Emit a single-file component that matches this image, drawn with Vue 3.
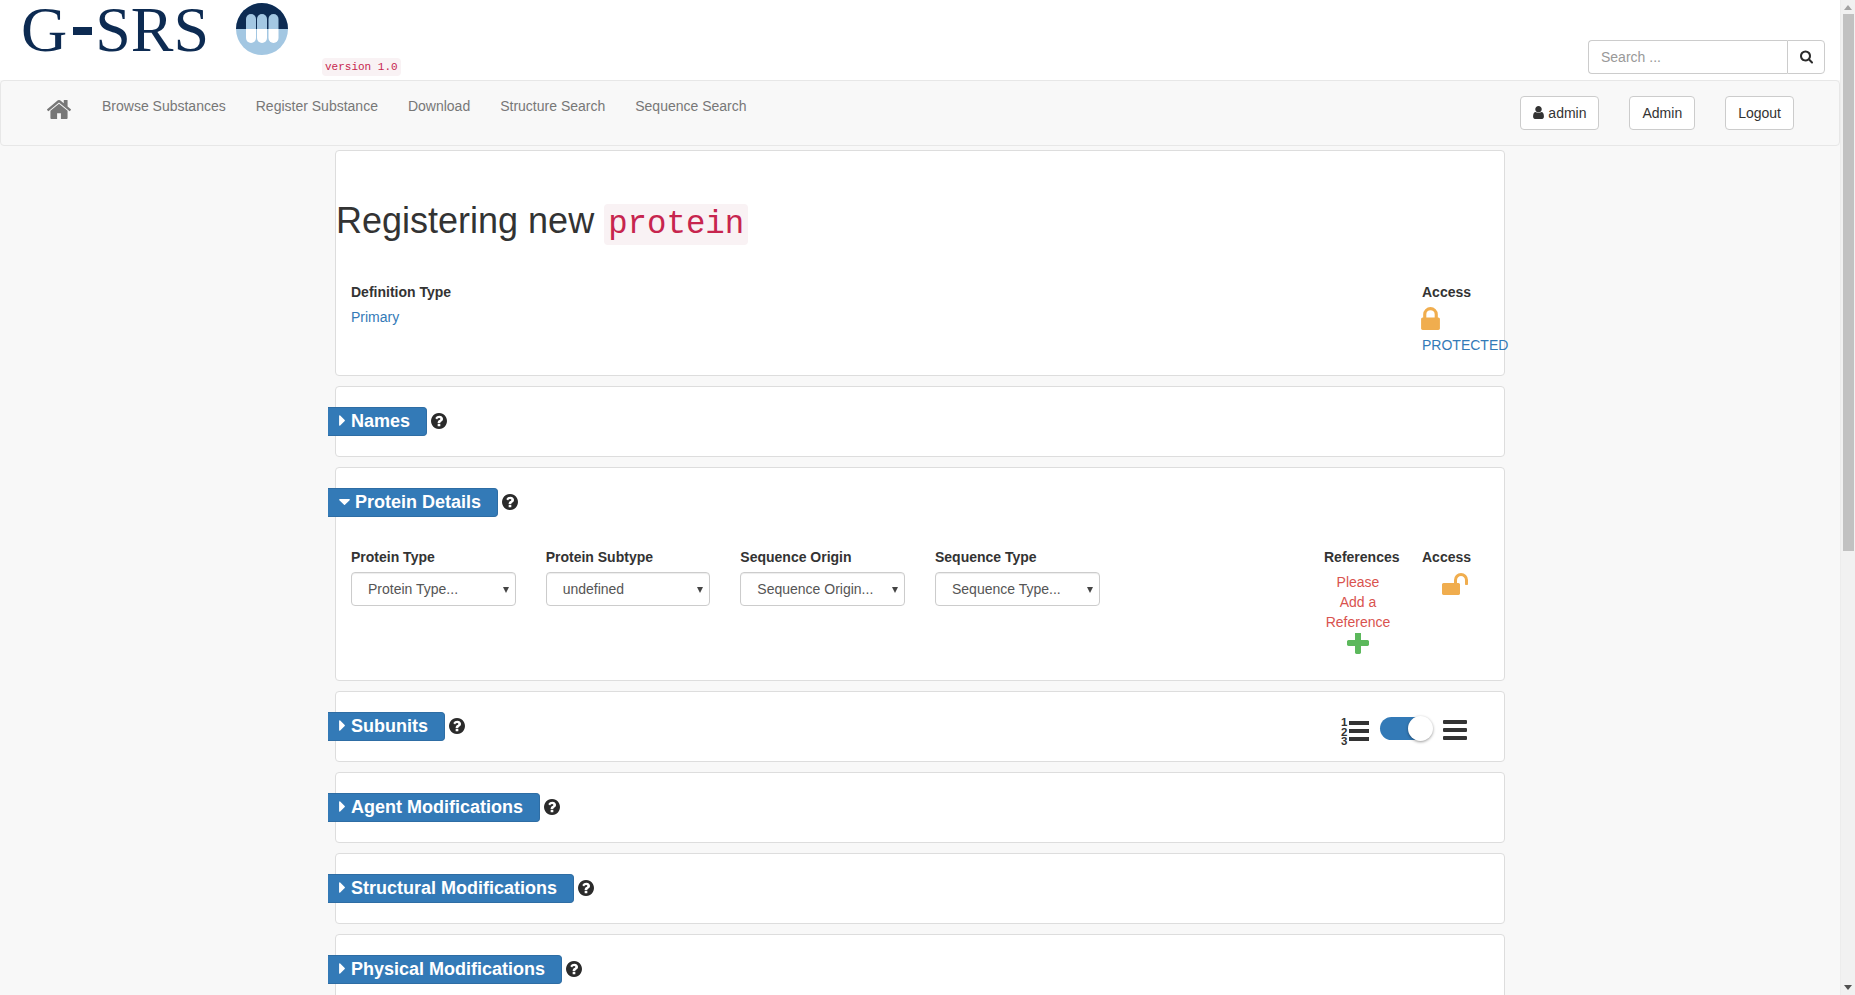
<template>
  <div class="screen">
    <div class="page">
      <header class="brand-bar">
        <div class="brand-text">G<span class="brand-dash">-</span>SRS</div>
        <svg class="brand-mark" width="52" height="52" viewBox="0 0 52 52">
          <defs>
            <clipPath id="upper"><rect x="0" y="0" width="52" height="26" /></clipPath>
            <clipPath id="lower"><rect x="0" y="26" width="52" height="26" /></clipPath>
          </defs>
          <circle cx="26" cy="26" r="26" fill="#a3c7e2" />
          <g clip-path="url(#upper)">
            <circle cx="26" cy="26" r="26" fill="#0d2b52" />
            <rect v-for="x in pillX" :key="x" :x="x" y="11" width="10" height="29" rx="5" fill="#a3c7e2" />
          </g>
          <g clip-path="url(#lower)">
            <rect v-for="x in pillX" :key="x" :x="x" y="11" width="10" height="29" rx="5" fill="#fff" />
          </g>
        </svg>
        <code class="version">version 1.0</code>
        <div class="search">
          <input class="search-input" type="text" placeholder="Search ..." />
          <button class="search-btn" type="button">
            <svg width="13" height="13.5" viewBox="64 64 1664 1728"><path :d="icons.search" fill="#2b2b2b" /></svg>
          </button>
        </div>
      </header>

      <nav class="navbar">
        <svg class="home" width="24" height="20" viewBox="90 192 1612 1344"><path :d="icons.home" fill="#777" /></svg>
        <a v-for="link in navLinks" :key="link" class="nav-link">{{ link }}</a>
        <div class="nav-actions">
          <button class="btn" type="button">
            <svg width="11" height="13" viewBox="256 128 1280 1536"><path :d="icons.user" fill="#333" /></svg>
            admin
          </button>
          <button class="btn" type="button">Admin</button>
          <button class="btn" type="button">Logout</button>
        </div>
      </nav>

      <main class="container">
        <section class="panel title-panel">
          <h1 class="title">Registering new <code class="title-code">protein</code></h1>
          <div class="def-row">
            <div class="def-type">
              <div class="label">Definition Type</div>
              <a class="link">Primary</a>
            </div>
            <div class="access">
              <div class="label">Access</div>
              <svg class="lock" width="19" height="23" viewBox="320 128 1152 1408"><path :d="icons.lock" fill="#f0ad4e" /></svg>
              <a class="link protected">PROTECTED</a>
            </div>
          </div>
        </section>

        <section v-for="section in sections" :key="section.title" class="panel section-panel">
          <div class="section-head">
            <div class="tab">
              <svg v-if="section.open" class="caret-down" width="11" height="6" viewBox="384 640 1024 576"><path :d="icons.caretDown" fill="#fff" /></svg>
              <svg v-else class="caret-right" width="6" height="11" viewBox="576 352 576 1088"><path :d="icons.caretRight" fill="#fff" /></svg>
              <span>{{ section.title }}</span>
            </div>
            <svg class="help" width="16" height="16" viewBox="128 128 1536 1536"><path :d="icons.question" fill="#2b2b2b" /></svg>

            <div v-if="section.toggle" class="view-toggle">
              <svg class="list-icon" width="29" height="30" viewBox="0 0 29 30">
                <text x="1" y="10" class="num">1</text>
                <text x="1" y="19.5" class="num">2</text>
                <text x="1" y="29" class="num">3</text>
                <rect x="9" y="5" width="20" height="4" fill="#333" />
                <rect x="9" y="13" width="20" height="4" fill="#333" />
                <rect x="9" y="21" width="20" height="4" fill="#333" />
              </svg>
              <div class="switch"><div class="knob"></div></div>
              <div class="bars"><i></i><i></i><i></i></div>
            </div>
          </div>

          <div v-if="section.open" class="fields">
            <div v-for="field in fields" :key="field.label" class="field">
              <label class="label">{{ field.label }}</label>
              <div class="select-wrap">
                <select class="form-control">
                  <option>{{ field.value }}</option>
                </select>
              </div>
            </div>
            <div class="refs">
              <div class="label">References</div>
              <div class="refs-body">
                <span class="refs-text">Please Add a Reference</span>
                <svg class="plus" width="22" height="22" viewBox="192 192 1408 1408"><path :d="icons.plus" fill="#5cb85c" /></svg>
              </div>
            </div>
            <div class="access">
              <div class="label">Access</div>
              <svg class="unlock" width="26" height="22" viewBox="64 128 1664 1408"><path :d="icons.unlock" fill="#f0ad4e" /></svg>
            </div>
          </div>
        </section>
      </main>
    </div>

    <div class="scrollbar">
      <span class="arrow up"></span>
      <div class="thumb"></div>
      <span class="arrow down"></span>
    </div>
  </div>
</template>

<script setup>
const pillX = [10, 21, 32.5]

const navLinks = ['Browse Substances', 'Register Substance', 'Download', 'Structure Search', 'Sequence Search']

const fields = [
  { label: 'Protein Type', value: 'Protein Type...' },
  { label: 'Protein Subtype', value: 'undefined' },
  { label: 'Sequence Origin', value: 'Sequence Origin...' },
  { label: 'Sequence Type', value: 'Sequence Type...' }
]

const sections = [
  { title: 'Names' },
  { title: 'Protein Details', open: true },
  { title: 'Subunits', toggle: true },
  { title: 'Agent Modifications' },
  { title: 'Structural Modifications' },
  { title: 'Physical Modifications' }
]

const icons = {
  home: 'M1472 992v480q0 26-19 45t-45 19h-384v-384h-256v384h-384q-26 0-45-19t-19-45v-480q0-1 .5-3t.5-3l575-474 575 474q1 2 1 6zm223-69l-62 74q-8 9-21 11h-3q-13 0-21-7l-692-577-692 577q-12 8-24 7-13-2-21-11l-62-74q-8-10-7-23.5t11-21.5l719-599q32-26 76-26t76 26l244 204v-195q0-14 9-23t23-9h192q14 0 23 9t9 23v408l219 182q10 8 11 21.5t-7 23.5z',
  user: 'M1536 1399q0 109-62.5 187t-150.5 78h-854q-88 0-150.5-78t-62.5-187q0-85 8.5-160.5t31.5-152 58.5-131 94-89 134.5-34.5q131 128 313 128t313-128q76 0 134.5 34.5t94 89 58.5 131 31.5 152 8.5 160.5zm-256-887q0 159-112.5 271.5t-271.5 112.5-271.5-112.5-112.5-271.5 112.5-271.5 271.5-112.5 271.5 112.5 112.5 271.5z',
  search: 'M1216 832q0-185-131.5-316.5t-316.5-131.5-316.5 131.5-131.5 316.5 131.5 316.5 316.5 131.5 316.5-131.5 131.5-316.5zm512 832q0 52-38 90t-90 38q-54 0-90-38l-343-342q-179 124-399 124-143 0-273.5-55.5t-225-150-150-225-55.5-273.5 55.5-273.5 150-225 225-150 273.5-55.5 273.5 55.5 225 150 150 225 55.5 273.5q0 220-124 399l343 343q37 37 37 90z',
  lock: 'M640 768h512v-192q0-106-75-181t-181-75-181 75-75 181v192zm832 96v576q0 40-28 68t-68 28h-960q-40 0-68-28t-28-68v-576q0-40 28-68t68-28h32v-192q0-184 132-316t316-132 316 132 132 316v192h32q40 0 68 28t28 68z',
  unlock: 'M1728 576v256q0 26-19 45t-45 19h-64q-26 0-45-19t-19-45v-256q0-106-75-181t-181-75-181 75-75 181v192h96q40 0 68 28t28 68v576q0 40-28 68t-68 28h-960q-40 0-68-28t-28-68v-576q0-40 28-68t68-28h672v-192q0-185 131.5-316.5t316.5-131.5 316.5 131.5 131.5 316.5z',
  plus: 'M1600 736v192q0 40-28 68t-68 28h-416v416q0 40-28 68t-68 28h-192q-40 0-68-28t-28-68v-416h-416q-40 0-68-28t-28-68v-192q0-40 28-68t68-28h416v-416q0-40 28-68t68-28h192q40 0 68 28t28 68v416h416q40 0 68 28t28 68z',
  question: 'M1024 1376v-192q0-14-9-23t-23-9h-192q-14 0-23 9t-9 23v192q0 14 9 23t23 9h192q14 0 23-9t9-23zm256-672q0-88-55.5-163t-138.5-116-170-41q-243 0-371 213-15 24 8 42l132 100q7 6 19 6 16 0 25-12 53-68 86-92 34-24 86-24 48 0 85.5 26t37.5 59q0 38-20 61t-68 45q-63 28-115.5 86.5t-52.5 125.5v36q0 14 9 23t23 9h192q14 0 23-9t9-23q0-19 21.5-49.5t54.5-49.5q32-18 49-28.5t46-35 44.5-48 28-60.5 12.5-81zm384 192q0 209-103 385.5t-279.5 279.5-385.5 103-385.5-103-279.5-279.5-103-385.5 103-385.5 279.5-279.5 385.5-103 385.5 103 279.5 279.5 103 385.5z',
  caretRight: 'M1152 896q0 26-19 45l-448 448q-19 19-45 19t-45-19-19-45v-896q0-26 19-45t45-19 45 19l448 448q19 19 19 45z',
  caretDown: 'M1408 704q0 26-19 45l-448 448q-19 19-45 19t-45-19l-448-448q-19-19-19-45t19-45 45-19h896q26 0 45 19t19 45z'
}
</script>

<style>
html,
body {
  margin: 0;
  overflow: hidden;
}
</style>

<style scoped>
* {
  box-sizing: border-box;
}

.screen {
  display: flex;
  width: 1855px;
  height: 995px;
  overflow: hidden;
  font-family: "Liberation Sans", Arial, sans-serif;
  font-size: 14px;
  line-height: 20px;
  color: #333;
}

.page {
  width: 1840px;
  height: 995px;
  overflow: hidden;
  background: #f8f8f8;
}

.brand-bar {
  display: flex;
  height: 80px;
  padding-left: 21px;
  background: #fff;
}

.brand-text {
  width: 215px;
  height: 76px;
  font-family: "Liberation Serif", "Times New Roman", serif;
  font-size: 64px;
  line-height: 60px;
  white-space: nowrap;
  color: #0d2b52;
}

.brand-dash {
  position: relative;
  display: inline-block;
  width: 28px;
  height: 60px;
  color: transparent;
  vertical-align: top;
}

.brand-dash::after {
  content: "";
  position: absolute;
  top: 27px;
  left: 6px;
  width: 19px;
  height: 8px;
  background: #0d2b52;
}

.brand-mark {
  flex-shrink: 0;
  margin-top: 3px;
}

.version {
  align-self: flex-start;
  margin: 58px 0 0 34px;
  padding: 2px 3px;
  font-family: "Liberation Mono", monospace;
  font-size: 11px;
  line-height: 14px;
  color: #c7254e;
  background: #f9f2f4;
  border-radius: 4px;
}

.search {
  display: flex;
  height: 34px;
  margin: 40px 15px 0 auto;
}

.search-input {
  width: 199px;
  height: 34px;
  padding: 6px 12px;
  font: inherit;
  color: #555;
  background: #fff;
  border: 1px solid #ccc;
  border-right: 0;
  border-radius: 4px 0 0 4px;
  outline: none;
}

.search-input::placeholder {
  color: #999;
}

.search-btn {
  display: flex;
  align-items: center;
  justify-content: center;
  width: 38px;
  height: 34px;
  padding: 0;
  background: #fff;
  border: 1px solid #ccc;
  border-radius: 0 4px 4px 0;
}

.navbar {
  display: flex;
  align-items: flex-start;
  height: 66px;
  padding: 15px 45px 0 46px;
  background: #f8f8f8;
  border: 1px solid #e7e7e7;
  border-radius: 4px;
}

.home {
  flex-shrink: 0;
  margin: 3px 31px 0 0;
}

.nav-link {
  margin-right: 30px;
  color: #777;
}

.nav-actions {
  display: flex;
  gap: 30px;
  margin-left: auto;
}

.btn {
  display: block;
  height: 34px;
  padding: 6px 12px;
  font: inherit;
  color: #333;
  background: #fff;
  border: 1px solid #ccc;
  border-radius: 4px;
}

.btn svg {
  vertical-align: -1px;
}

.container {
  width: 1170px;
  margin: 4px auto 0;
}

.panel {
  margin-bottom: 10px;
  background: #fff;
  border: 1px solid #ddd;
  border-radius: 4px;
}

.title-panel {
  height: 226px;
}

.title {
  margin: 0;
  padding-top: 50px;
  font-size: 36px;
  font-weight: 500;
  line-height: 40px;
}

.title-code {
  padding: 2px 4px;
  font-family: "Liberation Mono", monospace;
  font-size: 32.4px;
  color: #c7254e;
  background: #f9f2f4;
  border-radius: 4px;
}

.def-row {
  display: flex;
  justify-content: space-between;
  margin-top: 37px;
  padding: 0 14px 0 15px;
}

.label {
  display: block;
  font-weight: 700;
  white-space: nowrap;
}

.def-type .link {
  display: block;
  margin-top: 5px;
}

.link {
  color: #337ab7;
}

.access {
  flex-shrink: 0;
  width: 68px;
}

.lock {
  display: block;
  margin: 5px 0 0 -1px;
}

.protected {
  display: block;
  margin-top: 5px;
  white-space: nowrap;
}

.unlock {
  display: block;
  margin: 6px 0 0 20px;
}

.section-panel {
  min-height: 71px;
  padding-top: 20px;
}

.section-head {
  display: flex;
  align-items: center;
  height: 29px;
}

.tab {
  display: flex;
  align-items: center;
  height: 29px;
  margin-left: -8px;
  padding: 0 16px 2px 11px;
  font-size: 18px;
  font-weight: 700;
  color: #fff;
  white-space: nowrap;
  background: #337ab7;
  border: 1px solid #2e6da4;
  border-left: 0;
  border-radius: 0 4px 4px 0;
}

.caret-right {
  margin-right: 6px;
}

.caret-down {
  margin-right: 5px;
}

.help {
  margin: -2px 0 0 4px;
}

.view-toggle {
  display: flex;
  align-items: flex-start;
  align-self: flex-start;
  margin: 0 37px 0 auto;
}

.list-icon {
  margin-top: 4px;
}

.num {
  font-family: "Liberation Sans", Arial, sans-serif;
  font-size: 11.5px;
  font-weight: 700;
  fill: #333;
}

.switch {
  position: relative;
  width: 52px;
  height: 23px;
  margin: 5px 0 0 11px;
  background: #337ab7;
  border-radius: 12px;
}

.knob {
  position: absolute;
  top: -1px;
  right: -1px;
  width: 25px;
  height: 25px;
  background: #fff;
  border-radius: 50%;
  box-shadow: 0 1px 3px rgba(0, 0, 0, 0.4);
}

.bars {
  display: flex;
  flex-direction: column;
  gap: 4px;
  width: 24px;
  margin: 8px 0 0 11px;
}

.bars i {
  display: block;
  height: 4px;
  background: #333;
  border-radius: 1px;
}

.fields {
  display: flex;
  align-items: flex-start;
  gap: 30px;
  margin-top: 30px;
  padding: 0 14px 25px 15px;
}

.field {
  width: 164.67px;
  flex-shrink: 0;
}

.field .label {
  margin-bottom: 5px;
}

.select-wrap {
  position: relative;
}

.select-wrap::after {
  content: "";
  position: absolute;
  top: 15px;
  right: 7px;
  border-top: 6px solid #444;
  border-left: 3px solid transparent;
  border-right: 3px solid transparent;
  pointer-events: none;
}

.form-control {
  display: block;
  width: 100%;
  height: 34px;
  padding: 6px 16px;
  font: inherit;
  color: #555;
  background: #fff;
  border: 1px solid #ccc;
  border-radius: 4px;
  box-shadow: inset 0 1px 1px rgba(0, 0, 0, 0.075);
  appearance: none;
}

.refs {
  flex-shrink: 0;
  width: 68px;
  margin-left: auto;
}

.refs-body {
  display: flex;
  flex-direction: column;
  align-items: center;
  margin-top: 5px;
  text-align: center;
  color: #d9534f;
}

.refs-text {
  display: block;
  width: 68px;
}

.plus {
  margin-top: 1px;
}

.scrollbar {
  display: flex;
  flex-direction: column;
  align-items: center;
  width: 15px;
  height: 995px;
  background: #f1f1f1;
  border-left: 1px solid #ececec;
}

.thumb {
  width: 11px;
  height: 537px;
  margin-top: 4px;
  background: #c1c1c1;
}

.arrow {
  display: block;
  width: 0;
  height: 0;
  border-left: 4px solid transparent;
  border-right: 4px solid transparent;
}

.arrow.up {
  margin-top: 5px;
  border-bottom: 5px solid #a3a3a3;
}

.arrow.down {
  margin-top: auto;
  margin-bottom: 5px;
  border-top: 5px solid #505050;
}
</style>
